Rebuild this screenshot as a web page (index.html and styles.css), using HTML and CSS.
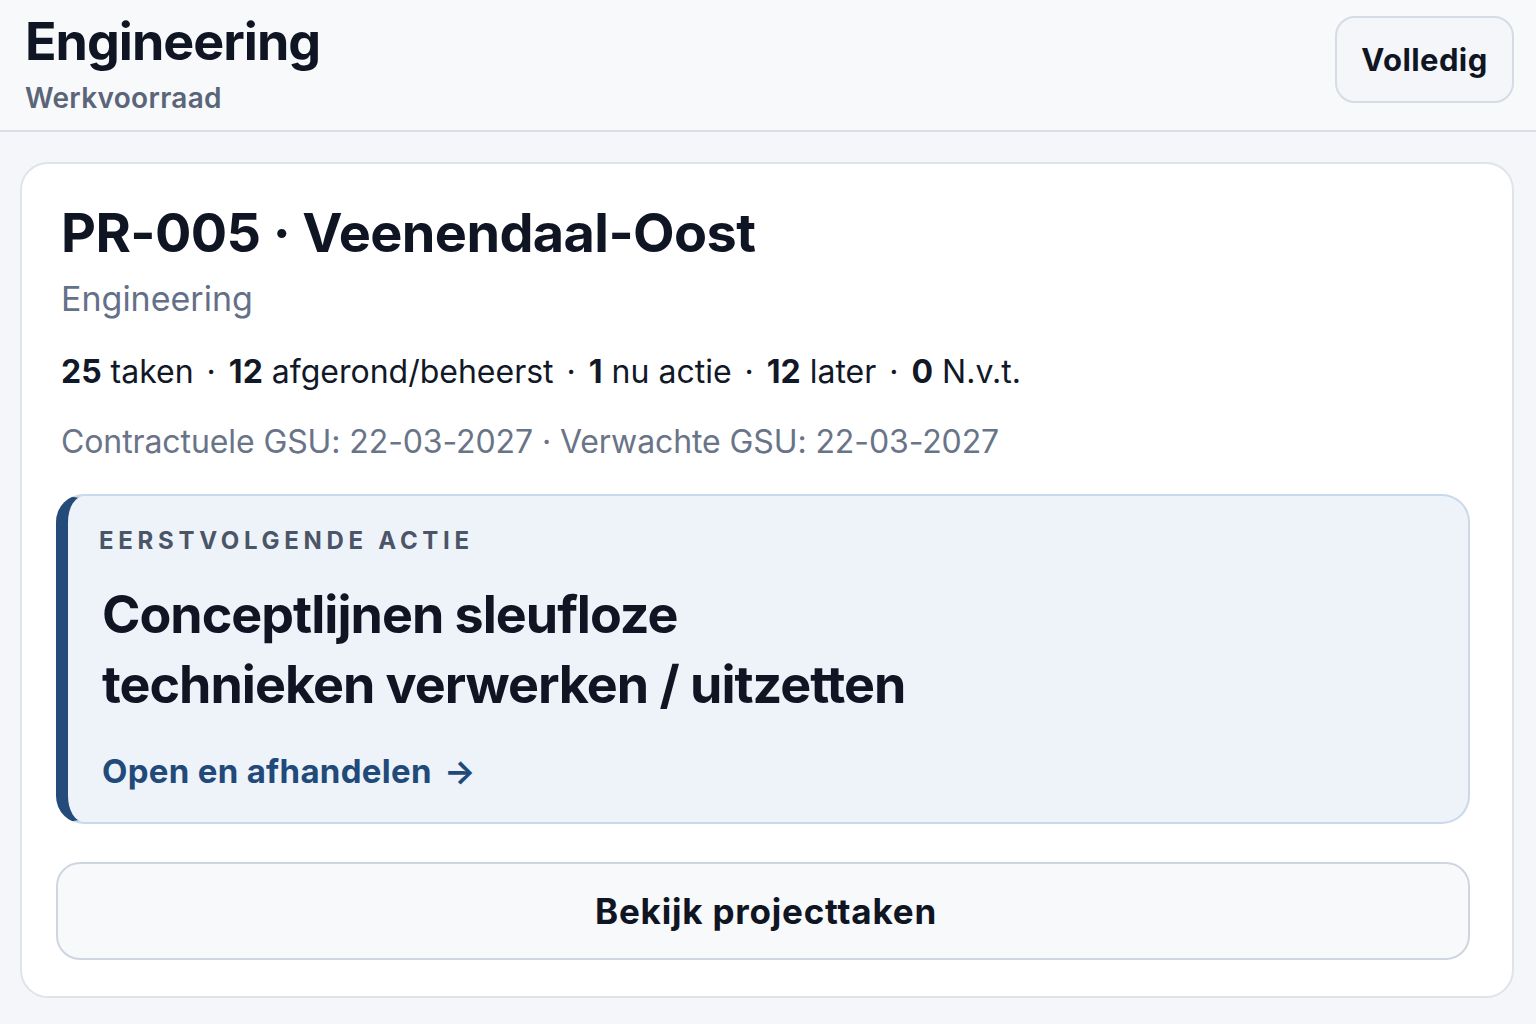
FILE: index.html
```html
<!DOCTYPE html>
<html>
<head>
    <title>Werkvoorraad</title>
    <link rel="stylesheet" href="styles.css">
</head>
<body>
    <div class="header">
        <div class="header-text">
            <h1 class="title">Engineering</h1>
            <p class="subtitle">Werkvoorraad</p>
        </div>
        <button class="btn-full">Volledig</button>
    </div>

    <div class="page">
        <div class="card">
            <div class="card-head">
                <h2 class="project">PR-005 · Veenendaal-Oost</h2>
                <p class="discipline">Engineering</p>
                <p class="stats">
                    <b>25</b> taken <span class="dot">·</span> <b>12</b> afgerond/beheerst <span class="dot">·</span> <b>1</b> nu actie <span class="dot">·</span> <b>12</b> later <span class="dot">·</span> <b>0</b> N.v.t.
                </p>
                <p class="dates">Contractuele GSU: 22-03-2027 · Verwachte GSU: 22-03-2027</p>
            </div>

            <div class="next">
                <p class="next-label">Eerstvolgende actie</p>
                <h3 class="next-title">Conceptlijnen sleufloze technieken verwerken / uitzetten</h3>
                <a class="next-link" href="#">Open en afhandelen <span class="arrow">→</span></a>
            </div>

            <button class="btn-tasks">Bekijk projecttaken</button>
        </div>
    </div>
</body>
</html>
```

FILE: styles.css
```css
body {
    font-family: Inter, "Noto Sans", sans-serif;
    margin: 0;
    background-color: #f5f6f9;
    color: #0f1523;
}

.header {
    display: flex;
    justify-content: space-between;
    align-items: flex-start;
    padding: 11px 22px 0 25px;
    height: 119px;
    border-bottom: 2px solid #dadfe7;
    background-color: #f8f9fb;
}
.title {
    margin: 0;
    font-size: 52px;
    font-weight: 700;
    letter-spacing: -1px;
    line-height: 62px;
}
.subtitle {
    margin: 8px 0 0;
    font-size: 28px;
    font-weight: 600;
    letter-spacing: 0.3px;
    color: #5b6578;
}
.btn-full {
    margin-top: 5px;
    width: 179px;
    height: 87px;
    border: 2px solid #d6dce6;
    border-radius: 20px;
    background-color: #f5f6f9;
    font-family: inherit;
    font-size: 31px;
    font-weight: 700;
    letter-spacing: 0.4px;
    color: #0f1523;
}

.page {
    padding: 30px 22px 20px 20px;
}
.card {
    background-color: #fff;
    border: 2px solid #dfe3ea;
    border-radius: 28px;
    padding: 36px 42px 36px 34px;
}
.card-head {
    padding-left: 5px;
}
.project {
    margin: 0;
    font-size: 54px;
    font-weight: 700;
    letter-spacing: -0.6px;
    line-height: 66px;
}
.discipline {
    margin: 12px 0 0;
    font-size: 34px;
    color: #647089;
}
.stats {
    margin: 33px 0 0;
    font-size: 32px;
    color: #111827;
}
.stats b {
    font-weight: 700;
}
.dot {
    margin: 0 4px;
}
.dates {
    margin: 31px 0 0;
    font-size: 32px;
    letter-spacing: -0.1px;
    color: #697488;
}

/* highlighted next action */
.next {
    margin-top: 33px;
    background-color: #eef3fa;
    border: 2px solid #c9d8ea;
    border-left: 12px solid #244b79;
    border-radius: 28px;
    padding: 30px 32px 31px 31px;
}
.next-label {
    margin: 0;
    font-size: 24px;
    font-weight: 700;
    letter-spacing: 4.7px;
    text-transform: uppercase;
    color: #4b5568;
}
.next-title {
    margin: 25px 0 0 3px;
    max-width: 840px;
    font-size: 52px;
    font-weight: 700;
    letter-spacing: -1px;
    line-height: 70px;
}
.next-link {
    display: inline-block;
    margin: 31px 0 0 3px;
    font-size: 33px;
    font-weight: 700;
    letter-spacing: 0.3px;
    color: #1f4a7a;
    text-decoration: none;
}
.arrow {
    margin-left: 4px;
}

.btn-tasks {
    display: block;
    width: 100%;
    margin-top: 38px;
    height: 98px;
    padding-left: 12px;
    border: 2px solid #cfd6e0;
    border-radius: 24px;
    background-color: #f8f9fb;
    font-family: inherit;
    font-size: 35px;
    font-weight: 700;
    letter-spacing: 0.8px;
    color: #0f1523;
}
```
